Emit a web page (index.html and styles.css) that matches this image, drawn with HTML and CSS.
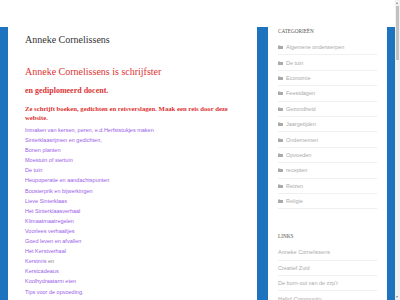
FILE: index.html
```html
<!DOCTYPE html>
<html lang="nl">
<head>
    <meta charset="UTF-8">
    <title>Anneke Cornelissens</title>
    <link rel="stylesheet" href="styles.css">
</head>
<body>

    <header class="top-bar"></header>

    <div class="site">
        <main class="content">
            <h1 class="page-title">Anneke Cornelissens</h1>
            <h2 class="intro">Anneke Cornelissens is schrijfster</h2>
            <h3 class="intro-sub">en gediplomeerd docent.</h3>
            <p class="intro-text">Ze schrijft boeken, gedichten en reisverslagen. Maak een reis door deze website.</p>

            <div class="posts">
                <div><a href="#">Inmaken van kersen, peren, e.d.Herfststukjes maken</a></div>
                <div><a href="#">Sinterklaasrijmen en gedichten,</a></div>
                <div><a href="#">Bonen planten</a></div>
                <div><a href="#">Moestuin of siertuin</a></div>
                <div><a href="#">De tuin</a></div>
                <div><a href="#">Heupoperatie en aandachtspunten</a></div>
                <div><a href="#">Boosterprik en bijwerkingen</a></div>
                <div><a href="#">Lieve Sinterklaas</a></div>
                <div><a href="#">Het Sinterklaasverhaal</a></div>
                <div><a href="#">Klimaatmaatregelen</a></div>
                <div><a href="#">Voorlees verhaaltjes</a></div>
                <div><a href="#">Goed leven en afvallen</a></div>
                <div><a href="#">Het Kerstverhaal</a></div>
                <div><a href="#">Kerstmis</a> en</div>
                <div><a href="#">Kerstcadeaus</a></div>
                <div><a href="#">Koolhydraatarm eten</a></div>
                <div><a href="#">Tips voor de opvoeding.</a></div>
                <div><a href="#">Moestuin voor een goed begin</a></div>
                <div><a href="#">Reizen door Europa</a></div>
                <div><a href="#">Gedichten</a></div>
            </div>
        </main>

        <aside class="sidebar">
            <section class="widget">
                <h4 class="widget-title">Categorieën</h4>
                <ul class="cat-list">
                    <li><svg class="folder" viewBox="0 0 10 8"><path d="M0 1h4l1 1h5v6H0z"/></svg><a href="#">Algemene onderwerpen</a></li>
                    <li><svg class="folder" viewBox="0 0 10 8"><path d="M0 1h4l1 1h5v6H0z"/></svg><a href="#">De tuin</a></li>
                    <li><svg class="folder" viewBox="0 0 10 8"><path d="M0 1h4l1 1h5v6H0z"/></svg><a href="#">Economie</a></li>
                    <li><svg class="folder" viewBox="0 0 10 8"><path d="M0 1h4l1 1h5v6H0z"/></svg><a href="#">Feestdagen</a></li>
                    <li><svg class="folder" viewBox="0 0 10 8"><path d="M0 1h4l1 1h5v6H0z"/></svg><a href="#">Gezondheid</a></li>
                    <li><svg class="folder" viewBox="0 0 10 8"><path d="M0 1h4l1 1h5v6H0z"/></svg><a href="#">Jaargetijden</a></li>
                    <li><svg class="folder" viewBox="0 0 10 8"><path d="M0 1h4l1 1h5v6H0z"/></svg><a href="#">Ondernemen</a></li>
                    <li><svg class="folder" viewBox="0 0 10 8"><path d="M0 1h4l1 1h5v6H0z"/></svg><a href="#">Opvoeden</a></li>
                    <li><svg class="folder" viewBox="0 0 10 8"><path d="M0 1h4l1 1h5v6H0z"/></svg><a href="#">recepten</a></li>
                    <li><svg class="folder" viewBox="0 0 10 8"><path d="M0 1h4l1 1h5v6H0z"/></svg><a href="#">Reizen</a></li>
                    <li><svg class="folder" viewBox="0 0 10 8"><path d="M0 1h4l1 1h5v6H0z"/></svg><a href="#">Religie</a></li>
                </ul>
            </section>

            <section class="widget">
                <h4 class="widget-title">Links</h4>
                <ul class="cat-list">
                    <li><a href="#">Anneke Cornelissens</a></li>
                    <li><a href="#">Creatief Zuid</a></li>
                    <li><a href="#">De burn-out van de zzp'r</a></li>
                    <li><a href="#">Hallo! Community</a></li>
                    <li><a href="#">Schrijvers</a></li>
                </ul>
            </section>
        </aside>
    </div>

    <div class="scrollbar">
        <span class="arrow-up"></span>
        <span class="thumb"></span>
        <span class="arrow-down"></span>
    </div>

</body>
</html>
```

FILE: styles.css
```css
html {
    background: #fff;
}

body {
    margin: 0;
    font-family: 'Liberation Sans', Arial, sans-serif;
    color: #777;
}

a {
    text-decoration: none;
}

.top-bar {
    height: 27px;
    background: #fff;
}

.site {
    display: flex;
    align-items: flex-start;
    gap: 11px;
    padding: 0 13px 0 8px;
    background: #1e73be;
}

.content {
    flex: none;
    width: 249px;
    box-sizing: border-box;
    padding: 7px 17px 40px;
    background: #fff;
}

.page-title {
    margin: 0;
    font-family: 'Liberation Serif', 'Times New Roman', serif;
    font-size: 10px;
    line-height: 12px;
    font-weight: normal;
    color: #333;
}

.intro {
    margin: 20px 0 0;
    font-family: 'Liberation Serif', 'Times New Roman', serif;
    font-size: 10px;
    line-height: 12px;
    font-weight: normal;
    color: #dd3333;
}

.intro-sub {
    margin: 8px 0 0;
    font-family: 'Liberation Serif', 'Times New Roman', serif;
    font-size: 8px;
    line-height: 10px;
    font-weight: bold;
    color: #dd3333;
}

.intro-text {
    margin: 7.5px 0 0;
    font-family: 'Liberation Serif', 'Times New Roman', serif;
    font-size: 6.7px;
    line-height: 9px;
    font-weight: bold;
    color: #dd3333;
}

.posts {
    margin-top: 3.5px;
    font-size: 5.5px;
    line-height: 10.1px;
    color: #888;
}

.posts a {
    color: #9a5ce8;
}

.sidebar {
    flex: none;
    width: 119px;
    box-sizing: border-box;
    padding: 0 10px 20px;
    background: #fff;
}

.widget + .widget {
    margin-top: 23px;
}

.widget-title {
    margin: 0;
    font-family: 'Liberation Serif', 'Times New Roman', serif;
    font-size: 5.2px;
    line-height: 8px;
    font-weight: normal;
    text-transform: uppercase;
    color: #555;
}

.cat-list {
    list-style: none;
    margin: 5px 0 0;
    padding: 0;
    font-size: 5.5px;
}

.cat-list li {
    display: flex;
    align-items: center;
    height: 14.4px;
    border-bottom: 1px solid #f0f0f0;
}

.cat-list a {
    color: #aaa;
}

.folder {
    width: 5px;
    height: 4px;
    margin-right: 3px;
    fill: #aaa;
}

/* drawn scrollbar, the screenshot shows one */
.scrollbar {
    position: fixed;
    top: 0;
    right: 0;
    width: 5px;
    height: 100vh;
    background: #f1f1f1;
}

.thumb {
    position: absolute;
    top: 6px;
    left: 1px;
    width: 3px;
    height: 54px;
    background: #c1c1c1;
}

.arrow-up,
.arrow-down {
    position: absolute;
    left: 1px;
    width: 0;
    height: 0;
    border-left: 1.5px solid transparent;
    border-right: 1.5px solid transparent;
}

.arrow-up {
    top: 2px;
    border-bottom: 2px solid #888;
}

.arrow-down {
    bottom: 2px;
    border-top: 2px solid #888;
}
```
